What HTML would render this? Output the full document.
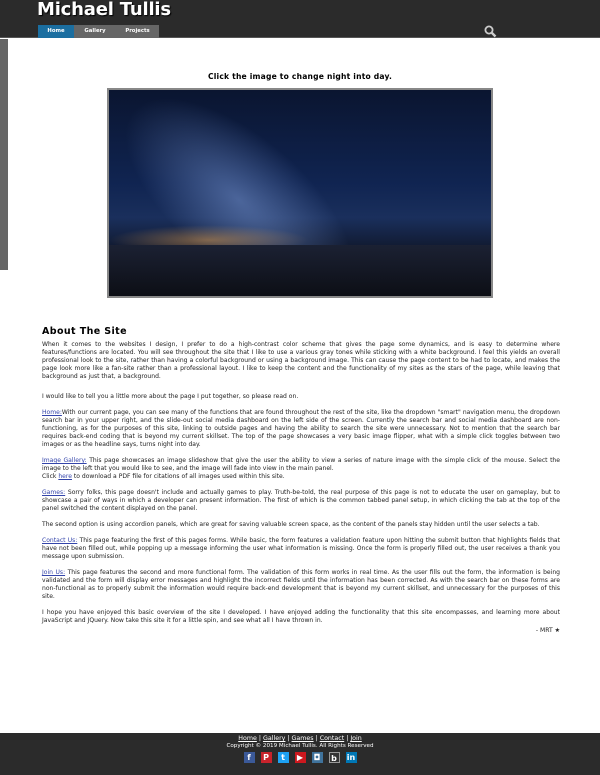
<!DOCTYPE html>
<html><head><style>
*{margin:0;padding:0;box-sizing:border-box}
body{width:600px;height:775px;background:#fff;font-family:"DejaVu Sans",Verdana,sans-serif;position:relative;overflow:hidden}
.hdr{position:absolute;left:0;top:0;width:600px;height:38px;background:#2b2b2b;border-bottom:1px solid #555}
.hdr h1{position:absolute;left:37px;top:-1px;color:#fff;font-size:18px;font-weight:bold;text-shadow:1px 1px 1px #000;letter-spacing:-.2px}
.tab{position:absolute;top:25px;height:13px;font-size:5.3px;color:#fff;text-align:center;line-height:12px;font-weight:bold}
.side{position:absolute;left:0;top:39px;width:8px;height:231px;background:#666}
.cap{position:absolute;top:72px;width:600px;text-align:center;font-size:7.6px;font-weight:bold;letter-spacing:.2px}
.img{position:absolute;left:107px;top:88px;width:386px;height:210px;border:2px solid #888;overflow:hidden;
background:linear-gradient(#0a1530,#102451 45%,#1a2f5c 62%,#10182c 78%,#07080c)}
.main{position:absolute;left:42px;top:328px;width:518px;font-size:6.05px;line-height:8px;color:#222;text-align:justify}
.main h2{font-size:9.5px;letter-spacing:.4px;margin-bottom:5px;color:#000}
.main p{margin-bottom:8px}
a{color:#3344aa;text-decoration:underline}
.ftr{position:absolute;left:0;top:733px;width:600px;height:42px;background:#2b2b2b;color:#fff;text-align:center;font-size:6.3px}
.ic{display:inline-block;width:11px;height:11px;margin:0 3px;vertical-align:top;color:#fff;font-size:8px;font-weight:bold;line-height:11px}
</style></head><body>
<div class="hdr"><h1>Michael Tullis</h1>
<div class="tab" style="left:38px;width:36px;background:#1b6ea0">Home</div>
<div class="tab" style="left:74px;width:42px;background:#666">Gallery</div>
<div class="tab" style="left:116px;width:43px;background:#666">Projects</div>
<svg style="position:absolute;left:484px;top:25px" width="13" height="13"><circle cx="5" cy="5" r="3.6" stroke="#ccc" stroke-width="1.8" fill="none"/><line x1="7.5" y1="7.5" x2="11.5" y2="11.5" stroke="#ccc" stroke-width="2.4"/></svg>
</div>
<div class="side"></div>
<div class="cap">Click the image to change night into day.</div>
<div class="img">
<div style="position:absolute;left:60px;top:-40px;width:140px;height:300px;transform:rotate(-50deg);background:radial-gradient(ellipse,rgba(120,150,210,.55),rgba(0,0,0,0) 65%)"></div>
<div style="position:absolute;left:0;top:135px;width:200px;height:30px;background:radial-gradient(ellipse,rgba(210,150,80,.55),rgba(0,0,0,0) 70%)"></div>
<div style="position:absolute;left:0;top:155px;width:386px;height:60px;background:linear-gradient(#1b2133,#0a0b10)"></div>
</div>
<div class="main">
<h2>About The Site</h2>
<p>When it comes to the websites I design, I prefer to do a high-contrast color scheme that gives the page some dynamics, and is easy to determine where features/functions are located. You will see throughout the site that I like to use a various gray tones while sticking with a white background. I feel this yields an overall professional look to the site, rather than having a colorful background or using a background image. This can cause the page content to be had to locate, and makes the page look more like a fan-site rather than a professional layout. I like to keep the content and the functionality of my sites as the stars of the page, while leaving that background as just that, a background.</p>
<p style="margin-top:12px">I would like to tell you a little more about the page I put together, so please read on.</p>
<p><a>Home:</a>With our current page, you can see many of the functions that are found throughout the rest of the site, like the dropdown "smart" navigation menu, the dropdown search bar in your upper right, and the slide-out social media dashboard on the left side of the screen. Currently the search bar and social media dashboard are non-functioning, as for the purposes of this site, linking to outside pages and having the ability to search the site were unnecessary. Not to mention that the search bar requires back-end coding that is beyond my current skillset. The top of the page showcases a very basic image flipper, what with a simple click toggles between two images or as the headline says, turns night into day.</p>
<p><a>Image Gallery:</a> This page showcases an image slideshow that give the user the ability to view a series of nature image with the simple click of the mouse. Select the image to the left that you would like to see, and the image will fade into view in the main panel.<br>Click <a>here</a> to download a PDF file for citations of all images used within this site.</p>
<p><a>Games:</a> Sorry folks, this page doesn't include and actually games to play. Truth-be-told, the real purpose of this page is not to educate the user on gameplay, but to showcase a pair of ways in which a developer can present information. The first of which is the common tabbed panel setup, in which clicking the tab at the top of the panel switched the content displayed on the panel.</p>
<p>The second option is using accordion panels, which are great for saving valuable screen space, as the content of the panels stay hidden until the user selects a tab.</p>
<p><a>Contact Us:</a> This page featuring the first of this pages forms. While basic, the form features a validation feature upon hitting the submit button that highlights fields that have not been filled out, while popping up a message informing the user what information is missing. Once the form is properly filled out, the user receives a thank you message upon submission.</p>
<p><a>Join Us:</a> This page features the second and more functional form. The validation of this form works in real time. As the user fills out the form, the information is being validated and the form will display error messages and highlight the incorrect fields until the information has been corrected. As with the search bar on these forms are non-functional as to properly submit the information would require back-end development that is beyond my current skillset, and unnecessary for the purposes of this site.</p>
<p style="margin-bottom:2px">I hope you have enjoyed this basic overview of the site I developed. I have enjoyed adding the functionality that this site encompasses, and learning more about JavaScript and JQuery. Now take this site it for a little spin, and see what all I have thrown in.</p>
<div style="text-align:right">- MRT ★</div>
</div>
<div class="ftr"><div style="margin-top:2px"><u>Home</u> | <u>Gallery</u> | <u>Games</u> | <u>Contact</u> | <u>Join</u></div>
<div style="font-size:5.6px;margin-top:1px">Copyright © 2019 Michael Tullis. All Rights Reserved</div>
<div style="margin-top:3px"><span class="ic" style="background:#3b5998">f</span><span class="ic" style="background:#c8232c">P</span><span class="ic" style="background:#1da1f2">t</span><span class="ic" style="background:#cc181e">▶</span><span class="ic" style="background:#3f729b">◘</span><span class="ic" style="background:#333;border:1px solid #999">b</span><span class="ic" style="background:#0077b5">in</span></div>
</div>
</body></html>
